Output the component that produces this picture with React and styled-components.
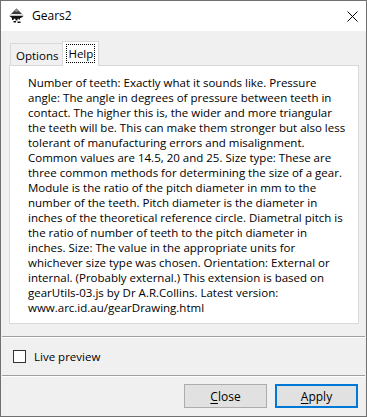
import React, { useState } from 'react';
import styled, { createGlobalStyle } from 'styled-components';

const GlobalStyle = createGlobalStyle`
  html, body {
    margin: 0;
    padding: 0;
    background: #f0f0f0;
  }
  * {
    box-sizing: border-box;
  }
`;

const Window = styled.div`
  width: 367px;
  height: 417px;
  border: 1px solid #707070;
  background: #f0f0f0;
  display: flex;
  flex-direction: column;
  font-family: "Open Sans", "Noto Sans", sans-serif;
  font-size: 11.5px;
  color: #000;
  overflow: hidden;
`;

const TitleBar = styled.div`
  height: 30px;
  background: #fff;
  display: flex;
  align-items: center;
  padding: 0 8px 0 7px;
  gap: 7px;
  flex-shrink: 0;
`;

const Title = styled.span`
  flex: 1;
  font-size: 12px;
  margin-top: -1px;
`;

const Body = styled.div`
  padding: 10px 7px 0 8px;
`;

const TabRow = styled.div`
  display: flex;
  align-items: flex-end;
  padding-left: 1px;
`;

const Tab = styled.div`
  position: relative;
  height: ${p => (p.$active ? '25px' : '22px')};
  padding: ${p => (p.$active ? '3px 4px 0 4px' : '3px 4px 0 5px')};
  background: ${p => (p.$active ? '#fff' : '#f0f0f0')};
  border: 1px solid #d9d9d9;
  border-bottom: none;
  border-right: ${p => (p.$active ? '1px solid #d9d9d9' : 'none')};
  margin-bottom: ${p => (p.$active ? '-1px' : '0')};
  z-index: ${p => (p.$active ? 1 : 0)};
`;

const FocusLabel = styled.span`
  display: inline-block;
  outline: 1px dotted #000;
  outline-offset: 0;
  padding: 0 1px;
  line-height: 17px;
`;

const TabLabel = styled.span`
  display: inline-block;
  line-height: 17px;
`;

const Panel = styled.div`
  width: 350px;
  height: 259px;
  background: #fff;
  border: 1px solid #d9d9d9;
  padding: 9px 0 0 18px;
`;

const Line = styled.div`
  white-space: nowrap;
  line-height: 15px;
`;

const Separator = styled.div`
  margin: 0 1px;
  border-top: 1px solid #a0a0a0;
  border-bottom: 1px solid #fff;
`;

const PreviewRow = styled.label`
  display: flex;
  align-items: center;
  height: 37px;
  padding-left: 12px;
  gap: 8px;
`;

const Box = styled.span`
  width: 13px;
  height: 13px;
  border: 1px solid #333;
  background: #fff;
`;

const ButtonRow = styled.div`
  display: flex;
  justify-content: flex-end;
  gap: 8px;
  padding: 7px 8px 0 0;
`;

const Button = styled.button`
  width: 83px;
  height: 24px;
  background: #e1e1e1;
  border: ${p => (p.$default ? '2px solid #0078d7' : '1px solid #adadad')};
  font-family: inherit;
  font-size: 12px;
  color: #000;
  padding: 0;
  cursor: pointer;
  u {
    text-decoration: underline;
    text-underline-offset: 2px;
  }
`;

const InkscapeIcon = () => (
  <svg width="17" height="16" viewBox="0 0 17 16">
    <path d="M8.5 0.5 L15.5 7.5 L1.5 7.5 Z" fill="#3a3a3a" />
    <path d="M8.5 0.5 L11 3 L8.5 4 L6 3 Z" fill="#8a8a8a" />
    <path d="M3 6 L14 6 L15.5 7.5 L1.5 7.5 Z" fill="#e8e8e8" />
    <path
      d="M1.5 8 L15.5 8 L13 10 L12 10 L12 11.5 L10.5 11.5 L10.5 10.5 L9.5 11 L9.5 12.5 L7.5 12.5 L7.5 11 L6 10.5 L5.5 12 L4 12 L4 10 Z"
      fill="#111"
    />
    <rect x="5.5" y="13" width="2.5" height="1.5" fill="#111" />
    <rect x="9.5" y="13.5" width="3" height="1.5" fill="#111" />
  </svg>
);

const CloseIcon = () => (
  <svg width="11" height="11" viewBox="0 0 11 11">
    <path d="M0.5 0.5 L10.5 10.5 M10.5 0.5 L0.5 10.5" stroke="#000" strokeWidth="1" />
  </svg>
);

const helpLines = [
  'Number of teeth: Exactly what it sounds like. Pressure',
  'angle: The angle in degrees of pressure between teeth in',
  'contact. The higher this is, the wider and more triangular',
  'the teeth will be. This can make them stronger but also less',
  'tolerant of manufacturing errors and misalignment.',
  'Common values are 14.5, 20 and 25. Size type: These are',
  'three common methods for determining the size of a gear.',
  'Module is the ratio of the pitch diameter in mm to the',
  'number of the teeth. Pitch diameter is the diameter in',
  'inches of the theoretical reference circle. Diametral pitch is',
  'the ratio of number of teeth to the pitch diameter in',
  'inches. Size: The value in the appropriate units for',
  'whichever size type was chosen. Orientation: External or',
  'internal. (Probably external.) This extension is based on',
  'gearUtils-03.js by Dr A.R.Collins. Latest version:',
  'www.arc.id.au/gearDrawing.html',
];

const App = () => {
  const [live, setLive] = useState(false);

  return (
    <Window>
      <GlobalStyle />
      <TitleBar>
        <InkscapeIcon />
        <Title>Gears2</Title>
        <CloseIcon />
      </TitleBar>
      <Body>
        <TabRow>
          <Tab>
            <TabLabel>Options</TabLabel>
          </Tab>
          <Tab $active>
            <FocusLabel>Help</FocusLabel>
          </Tab>
        </TabRow>
        <Panel>
          {helpLines.map((l, i) => (
            <Line key={i}>{l}</Line>
          ))}
        </Panel>
      </Body>
      <div style={{ height: 12 }} />
      <Separator />
      <PreviewRow onClick={() => setLive(!live)}>
        <Box />
        <span>Live preview</span>
      </PreviewRow>
      <Separator />
      <ButtonRow>
        <Button><u>C</u>lose</Button>
        <Button $default><u>A</u>pply</Button>
      </ButtonRow>
    </Window>
  );
};

export default App;
